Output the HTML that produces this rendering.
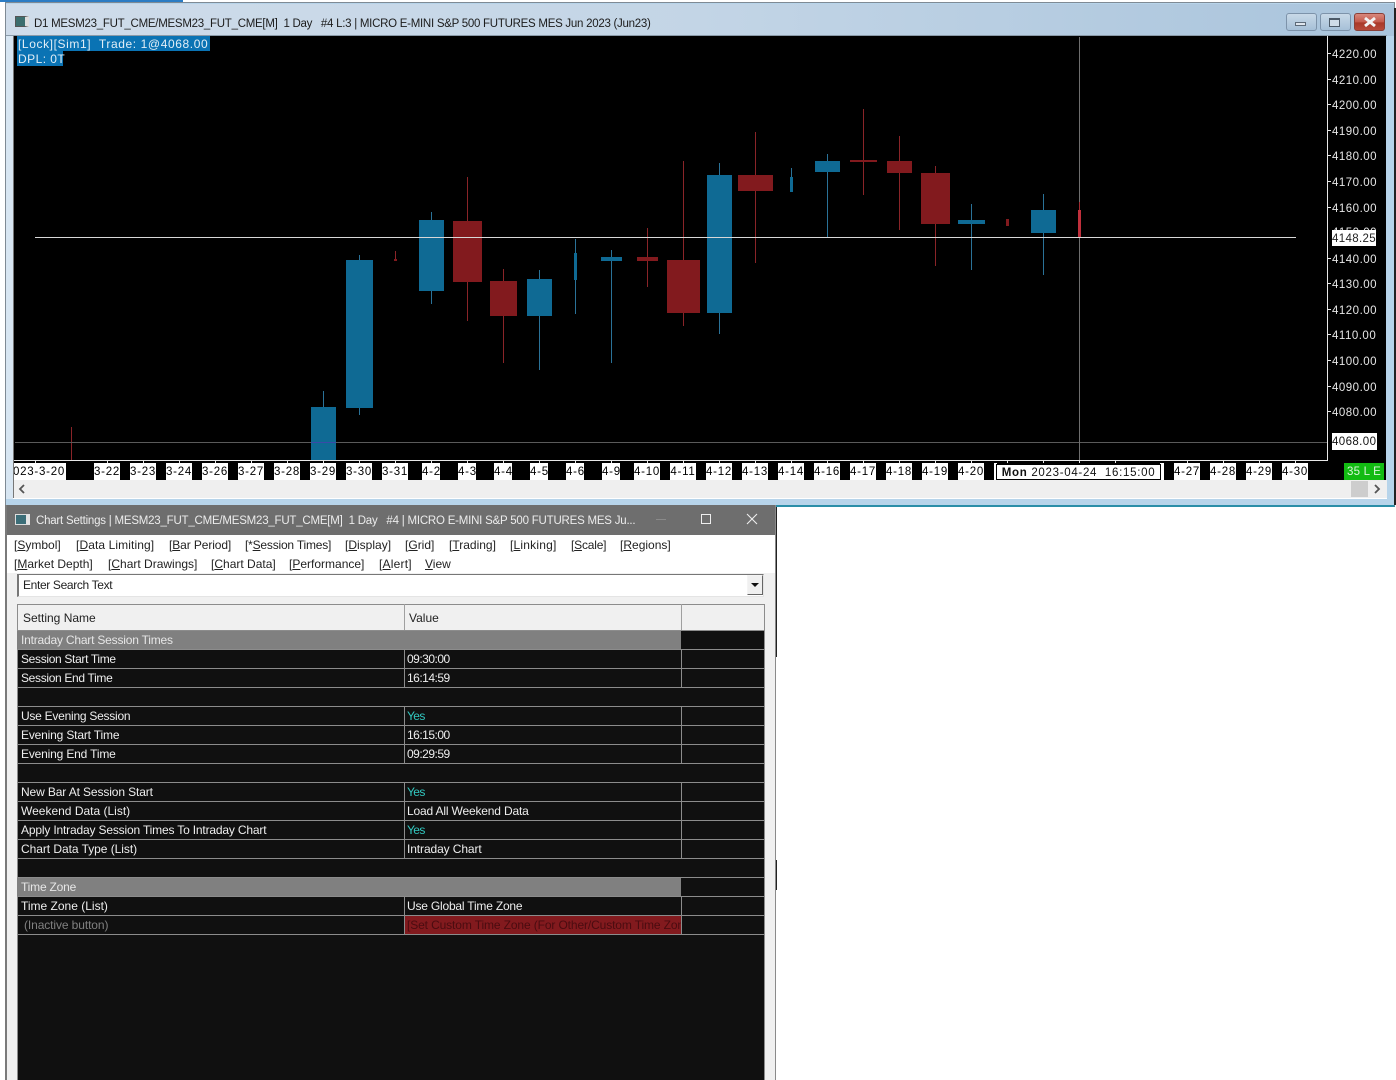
<!DOCTYPE html>
<html><head><meta charset="utf-8"><style>
html,body{margin:0;padding:0;background:#fff;width:1396px;height:1080px;overflow:hidden}
body{position:relative;font-family:"Liberation Sans",sans-serif}
div{position:absolute;box-sizing:border-box;white-space:nowrap}
.p{left:1332px;width:50px;height:16px;line-height:18px;font-size:11.5px;letter-spacing:.5px;color:#e6e6e6}
.d{top:463px;height:17px;line-height:19px;background:#fff;color:#000;font-size:11.5px;letter-spacing:.75px;text-align:center;overflow:hidden}
.m{font-size:12px;line-height:16px;height:16px;color:#222}
.t{font-size:12px;line-height:18px;height:18px;color:#eee;letter-spacing:-.17px}
.n{letter-spacing:-.5px}
.c{color:#32c8c0;letter-spacing:-.6px}
.g{left:17px;width:664px;height:18px;background:#808080;color:#e6e6e6;font-size:12px;line-height:18px;padding-left:4px;letter-spacing:-.2px}
.l{left:17px;width:748px;height:1px;background:#8c8c8c}
u{text-decoration-thickness:1px;text-underline-offset:1px}
</style></head><body>

<div style="left:0;top:0;width:183px;height:2px;background:#2b7cc4"></div>

<!-- chart window -->
<div style="left:5px;top:2px;width:1390px;height:505px;background:#b7d4ea;border:1px solid #7f8a94;border-bottom:2px solid #2a8ea8"></div>
<div style="left:6px;top:4px;width:1388px;height:32px;background:linear-gradient(90deg,#cfdcea 0%,#c3d5e6 50%,#a9c4dc 100%)"></div>
<div style="left:6px;top:35px;width:1381px;height:1px;background:#8a9aa8"></div>
<div style="left:1394px;top:8px;width:2px;height:497px;background:#222"></div>
<div style="left:6px;top:36px;width:7px;height:463px;background:#d8e6f2"></div>
<div style="left:15px;top:16px;width:14px;height:11px;background:#3c6e6e;border:1px solid #555;border-right:4px solid #ddd"></div>
<div style="left:34px;top:15px;font-size:11.5px;line-height:18px;height:18px;color:#1c1c1c;letter-spacing:-.27px">D1 MESM23_FUT_CME/MESM23_FUT_CME[M]&nbsp; 1 Day &nbsp; #4 L:3 | MICRO E-MINI S&amp;P 500 FUTURES MES Jun 2023 (Jun23)</div>

<!-- window buttons -->
<div style="left:1286px;top:13px;width:31px;height:18px;border:1px solid #7d93aa;border-radius:3px;background:linear-gradient(#c8d9e8,#a6c0d8)"></div>
<div style="left:1295px;top:22px;width:11px;height:4px;background:#dfe6ee;border:1px solid #5c6a78"></div>
<div style="left:1320px;top:13px;width:31px;height:18px;border:1px solid #7d93aa;border-radius:3px;background:linear-gradient(#c8d9e8,#a6c0d8)"></div>
<div style="left:1329px;top:18px;width:11px;height:9px;background:#cfdce8;border:1px solid #4c5a68;border-top-width:2px"></div>
<div style="left:1354px;top:13px;width:31px;height:18px;border:1px solid #8a4038;border-radius:3px;background:linear-gradient(#d8887c 0,#c45a4c 50%,#a83828 55%,#b84a3a 100%)"></div>
<svg style="position:absolute;left:1363px;top:16px" width="14" height="12"><path d="M2 2 L12 10 M12 2 L2 10" stroke="#f2f2f2" stroke-width="3"/></svg>

<!-- chart -->
<div style="left:14px;top:36px;width:1372px;height:445px;background:#000"></div>
<svg style="position:absolute;left:0;top:0" width="1396" height="510">
<g fill="#2a7298">
<rect x="323" y="391" width="1" height="16"/>
<rect x="359" y="255" width="1" height="160"/>
<rect x="431" y="212" width="1" height="92"/>
<rect x="539" y="270" width="1" height="100"/>
<rect x="575" y="239" width="1" height="75"/>
<rect x="611" y="250" width="1" height="113"/>
<rect x="719" y="163" width="1" height="171"/>
<rect x="791" y="168" width="1" height="24"/>
<rect x="827" y="154" width="1" height="83"/>
<rect x="971" y="204" width="1" height="66"/>
<rect x="1043" y="194" width="1" height="81"/>
</g>
<g fill="#0f6a94">
<rect x="311" y="407" width="25" height="54"/>
<rect x="346" y="260" width="27" height="148"/>
<rect x="419" y="220" width="25" height="71"/>
<rect x="527" y="279" width="25" height="37"/>
<rect x="574" y="253" width="3" height="27"/>
<rect x="601" y="257" width="21" height="4"/>
<rect x="707" y="175" width="25" height="138"/>
<rect x="790" y="177" width="3" height="15"/>
<rect x="815" y="161" width="25" height="11"/>
<rect x="958" y="220" width="27" height="4"/>
<rect x="1031" y="210" width="25" height="23"/>
</g>
<g fill="#8a2428">
<rect x="71" y="427" width="1" height="34"/>
<rect x="395" y="251" width="1" height="10"/>
<rect x="467" y="177" width="1" height="144"/>
<rect x="503" y="269" width="1" height="94"/>
<rect x="647" y="228" width="1" height="59"/>
<rect x="683" y="161" width="1" height="165"/>
<rect x="755" y="132" width="1" height="131"/>
<rect x="863" y="109" width="1" height="86"/>
<rect x="899" y="136" width="1" height="94"/>
<rect x="935" y="166" width="1" height="100"/>
</g>
<g fill="#821a1e">
<rect x="394" y="259" width="3" height="2"/>
<rect x="453" y="221" width="29" height="61"/>
<rect x="490" y="281" width="27" height="35"/>
<rect x="637" y="257" width="21" height="4"/>
<rect x="667" y="260" width="33" height="53"/>
<rect x="738" y="175" width="35" height="16"/>
<rect x="850" y="160" width="27" height="2"/>
<rect x="887" y="161" width="25" height="12"/>
<rect x="921" y="173" width="29" height="51"/>
<rect x="1006" y="219" width="3" height="7"/>
</g>
<rect x="15" y="442" width="1312" height="1" fill="#5a5a5a"/>
<rect x="1079" y="37" width="1" height="424" fill="#6e6e6e"/>
<rect x="1078" y="210" width="3" height="27" fill="#c0303c"/><rect x="1079" y="202" width="1" height="8" fill="#a02a30"/>
<rect x="35" y="237" width="1261" height="1" fill="#d8d8d8"/>
<rect x="311" y="442" width="25" height="1" fill="#3a4aa8"/>
<rect x="1327" y="36" width="1" height="425" fill="#e8e8e8"/>
<rect x="14" y="460" width="1314" height="1" fill="#e8e8e8"/>
<g fill="#e8e8e8">
<rect x="1328" y="53" width="3" height="1"/><rect x="1328" y="79" width="3" height="1"/><rect x="1328" y="104" width="3" height="1"/><rect x="1328" y="130" width="3" height="1"/><rect x="1328" y="155" width="3" height="1"/><rect x="1328" y="181" width="3" height="1"/><rect x="1328" y="207" width="3" height="1"/><rect x="1328" y="258" width="3" height="1"/><rect x="1328" y="283" width="3" height="1"/><rect x="1328" y="309" width="3" height="1"/><rect x="1328" y="334" width="3" height="1"/><rect x="1328" y="360" width="3" height="1"/><rect x="1328" y="386" width="3" height="1"/><rect x="1328" y="411" width="3" height="1"/>
<rect x="35" y="461" width="1" height="2"/><rect x="107" y="461" width="1" height="2"/><rect x="143" y="461" width="1" height="2"/><rect x="179" y="461" width="1" height="2"/><rect x="215" y="461" width="1" height="2"/><rect x="251" y="461" width="1" height="2"/><rect x="287" y="461" width="1" height="2"/><rect x="323" y="461" width="1" height="2"/><rect x="359" y="461" width="1" height="2"/><rect x="395" y="461" width="1" height="2"/><rect x="431" y="461" width="1" height="2"/><rect x="467" y="461" width="1" height="2"/><rect x="503" y="461" width="1" height="2"/><rect x="539" y="461" width="1" height="2"/><rect x="575" y="461" width="1" height="2"/><rect x="611" y="461" width="1" height="2"/><rect x="647" y="461" width="1" height="2"/><rect x="683" y="461" width="1" height="2"/><rect x="719" y="461" width="1" height="2"/><rect x="755" y="461" width="1" height="2"/><rect x="791" y="461" width="1" height="2"/><rect x="827" y="461" width="1" height="2"/><rect x="863" y="461" width="1" height="2"/><rect x="899" y="461" width="1" height="2"/><rect x="935" y="461" width="1" height="2"/><rect x="971" y="461" width="1" height="2"/><rect x="1007" y="461" width="1" height="2"/><rect x="1043" y="461" width="1" height="2"/><rect x="1079" y="461" width="1" height="2"/><rect x="1115" y="461" width="1" height="2"/><rect x="1187" y="461" width="1" height="2"/><rect x="1223" y="461" width="1" height="2"/><rect x="1259" y="461" width="1" height="2"/><rect x="1295" y="461" width="1" height="2"/>
</g>
</svg>

<div style="left:17px;top:36px;width:193px;height:15px;background:#0a73b4"></div>
<div style="left:17px;top:51px;width:46px;height:15px;background:#0a73b4"></div>
<div style="left:18px;top:37px;height:15px;line-height:15px;font-size:12px;letter-spacing:.6px;color:#e2eef6">[Lock][Sim1]&nbsp; Trade: 1@4068.00</div>
<div style="left:18px;top:52px;height:15px;line-height:15px;font-size:12px;letter-spacing:.45px;color:#e2eef6">DPL: 0T</div>

<!-- price labels -->
<div class="p" style="top:46px">4220.00</div><div class="p" style="top:72px">4210.00</div><div class="p" style="top:97px">4200.00</div><div class="p" style="top:123px">4190.00</div><div class="p" style="top:148px">4180.00</div><div class="p" style="top:174px">4170.00</div><div class="p" style="top:200px">4160.00</div>
<div class="p" style="top:224px">4150.00</div>
<div class="p" style="top:251px">4140.00</div><div class="p" style="top:276px">4130.00</div><div class="p" style="top:302px">4120.00</div><div class="p" style="top:327px">4110.00</div><div class="p" style="top:353px">4100.00</div><div class="p" style="top:379px">4090.00</div><div class="p" style="top:404px">4080.00</div>
<div class="p" style="left:1332px;top:230px;width:44px;height:16px;line-height:19px;background:#fff;color:#222;letter-spacing:.35px">4148.25</div>
<div class="p" style="left:1332px;top:433px;width:45px;height:17px;line-height:19px;background:#fff;color:#111;letter-spacing:.4px">4068.00</div>

<!-- date labels -->
<div class="d" style="left:14px;width:52px;text-align:left"><span style="margin-left:-1px">023-3-20</span></div>
<div class="d" style="left:94px;width:26px">3-22</div><div class="d" style="left:130px;width:26px">3-23</div><div class="d" style="left:166px;width:26px">3-24</div><div class="d" style="left:202px;width:26px">3-26</div><div class="d" style="left:238px;width:26px">3-27</div><div class="d" style="left:274px;width:26px">3-28</div><div class="d" style="left:310px;width:26px">3-29</div><div class="d" style="left:346px;width:26px">3-30</div><div class="d" style="left:382px;width:26px">3-31</div>
<div class="d" style="left:422px;width:18px">4-2</div><div class="d" style="left:458px;width:18px">4-3</div><div class="d" style="left:494px;width:18px">4-4</div><div class="d" style="left:530px;width:18px">4-5</div><div class="d" style="left:566px;width:18px">4-6</div><div class="d" style="left:602px;width:18px">4-9</div>
<div class="d" style="left:634px;width:26px">4-10</div><div class="d" style="left:670px;width:26px">4-11</div><div class="d" style="left:706px;width:26px">4-12</div><div class="d" style="left:742px;width:26px">4-13</div><div class="d" style="left:778px;width:26px">4-14</div><div class="d" style="left:814px;width:26px">4-16</div><div class="d" style="left:850px;width:26px">4-17</div><div class="d" style="left:886px;width:26px">4-18</div><div class="d" style="left:922px;width:26px">4-19</div><div class="d" style="left:958px;width:26px">4-20</div>
<div class="d" style="left:994px;width:3px;background:#fff"></div>
<div class="d" style="left:1160px;width:4px;background:#fff"></div>
<div class="d" style="left:1174px;width:26px">4-27</div><div class="d" style="left:1210px;width:26px">4-28</div><div class="d" style="left:1246px;width:26px">4-29</div><div class="d" style="left:1282px;width:26px">4-30</div>
<div style="left:996px;top:464px;width:165px;height:16px;line-height:16px;background:#fff;border:1px solid #000;color:#111;font-size:11.5px;letter-spacing:.7px;text-align:center"><b>Mon</b> 2023-04-24&nbsp; 16:15:00</div>
<div style="left:1344px;top:463px;width:40px;height:17px;line-height:19px;background:#12bb12;color:#d8f4d8;font-size:11.5px;letter-spacing:.2px;text-align:center">35 L E</div>

<!-- scrollbar -->
<div style="left:13px;top:480px;width:1374px;height:18px;background:#efefef"></div>
<div style="left:13px;top:498px;width:1374px;height:1px;background:#fff"></div>
<div style="left:13px;top:36px;width:1px;height:462px;background:#777"></div>
<div style="left:1351px;top:481px;width:17px;height:16px;background:#cdcdcd"></div>
<svg style="position:absolute;left:18px;top:484px" width="8" height="10"><path d="M6 1 L2 5 L6 9" fill="none" stroke="#555" stroke-width="1.8"/></svg>
<svg style="position:absolute;left:1373px;top:484px" width="8" height="10"><path d="M2 1 L6 5 L2 9" fill="none" stroke="#555" stroke-width="1.8"/></svg>

<!-- settings window -->
<div style="left:776px;top:507px;width:1px;height:150px;background:#222"></div>
<div style="left:776px;top:860px;width:1px;height:30px;background:#222"></div>
<div style="left:5px;top:505px;width:771px;height:575px;background:#f0f0f0;border-left:2px solid #7a7a7a;border-right:1px solid #8a8a8a"></div>
<div style="left:7px;top:505px;width:768px;height:30px;background:#6e6e6e"></div>
<div style="left:7px;top:535px;width:768px;height:38px;background:#fff"></div>
<div style="left:15px;top:514px;width:15px;height:11px;background:#3c6e78;border:1px solid #ddd;border-right:4px solid #e4e4e4"></div>
<div style="left:36px;top:512px;font-size:11.5px;line-height:18px;height:18px;color:#ececec;letter-spacing:-.22px">Chart Settings | MESM23_FUT_CME/MESM23_FUT_CME[M]&nbsp; 1 Day &nbsp; #4 | MICRO E-MINI S&amp;P 500 FUTURES MES Ju...</div>
<div style="left:656px;top:519px;width:10px;height:1px;background:#8a8a8a"></div>
<div style="left:701px;top:514px;width:10px;height:10px;border:1px solid #eee"></div>
<svg style="position:absolute;left:746px;top:513px" width="12" height="12"><path d="M1 1 L11 11 M11 1 L1 11" stroke="#eee" stroke-width="1.1"/></svg>

<div class="m" style="left:14px;top:537px">[<u>S</u>ymbol]</div><div class="m" style="left:76px;top:537px;letter-spacing:.1px">[<u>D</u>ata Limiting]</div><div class="m" style="left:169px;top:537px;letter-spacing:-.1px">[<u>B</u>ar Period]</div><div class="m" style="left:245px;top:537px;letter-spacing:-.2px">[*<u>S</u>ession Times]</div><div class="m" style="left:345px;top:537px">[<u>D</u>isplay]</div><div class="m" style="left:405px;top:537px">[<u>G</u>rid]</div><div class="m" style="left:449px;top:537px">[<u>T</u>rading]</div><div class="m" style="left:510px;top:537px;letter-spacing:.2px">[<u>L</u>inking]</div><div class="m" style="left:571px;top:537px;letter-spacing:-.2px">[<u>S</u>cale]</div><div class="m" style="left:620px;top:537px">[<u>R</u>egions]</div>
<div class="m" style="left:14px;top:556px">[<u>M</u>arket Depth]</div><div class="m" style="left:108px;top:556px">[<u>C</u>hart Drawings]</div><div class="m" style="left:211px;top:556px">[<u>C</u>hart Data]</div><div class="m" style="left:289px;top:556px">[<u>P</u>erformance]</div><div class="m" style="left:379px;top:556px;letter-spacing:.2px">[<u>A</u>lert]</div><div class="m" style="left:425px;top:556px"><u>V</u>iew</div>

<div style="left:17px;top:574px;width:747px;height:23px;background:#fff;border:1px solid #e4e4e4;border-top:1px solid #777;border-left:2px solid #777"></div>
<div class="m" style="left:23px;top:577px;letter-spacing:-.35px">Enter Search Text</div>
<div style="left:747px;top:575px;width:16px;height:20px;background:#f0f0f0;border:1px solid #f4f4f4;border-right-color:#666;border-bottom-color:#666"></div>
<svg style="position:absolute;left:751px;top:583px" width="9" height="5"><path d="M0 0 H8 L4 4 Z" fill="#111"/></svg>

<!-- table -->
<div style="left:17px;top:604px;width:748px;height:26px;background:#f0f0f0;border:1px solid #8c8c8c;border-bottom:0"></div>
<div class="m" style="left:23px;top:610px">Setting Name</div>
<div class="m" style="left:409px;top:610px">Value</div>
<div style="left:17px;top:630px;width:748px;height:450px;background:#101010"></div>
<div style="left:17px;top:604px;width:1px;height:476px;background:#8c8c8c"></div>
<div style="left:764px;top:604px;width:1px;height:476px;background:#8c8c8c"></div>
<div style="left:404px;top:604px;width:1px;height:26px;background:#a0a0a0"></div>
<div style="left:681px;top:604px;width:1px;height:26px;background:#a0a0a0"></div>
<div class="g" style="top:631px">Intraday Chart Session Times</div>
<div class="g" style="top:878px">Time Zone</div>
<div style="left:404px;top:650px;width:1px;height:38px;background:#8c8c8c"></div><div style="left:681px;top:650px;width:1px;height:38px;background:#8c8c8c"></div>
<div style="left:404px;top:707px;width:1px;height:57px;background:#8c8c8c"></div><div style="left:681px;top:707px;width:1px;height:57px;background:#8c8c8c"></div>
<div style="left:404px;top:783px;width:1px;height:76px;background:#8c8c8c"></div><div style="left:681px;top:783px;width:1px;height:76px;background:#8c8c8c"></div>
<div style="left:404px;top:897px;width:1px;height:38px;background:#8c8c8c"></div><div style="left:681px;top:897px;width:1px;height:38px;background:#8c8c8c"></div>
<div class="l" style="top:630px"></div><div class="l" style="top:649px"></div><div class="l" style="top:668px"></div><div class="l" style="top:687px"></div><div class="l" style="top:706px"></div><div class="l" style="top:725px"></div><div class="l" style="top:744px"></div><div class="l" style="top:763px"></div><div class="l" style="top:782px"></div><div class="l" style="top:801px"></div><div class="l" style="top:820px"></div><div class="l" style="top:839px"></div><div class="l" style="top:858px"></div><div class="l" style="top:877px"></div><div class="l" style="top:896px"></div><div class="l" style="top:915px"></div><div class="l" style="top:934px"></div>

<div class="t" style="left:21px;top:650px;letter-spacing:-.33px">Session Start Time</div><div class="t n" style="left:407px;top:650px">09:30:00</div>
<div class="t" style="left:21px;top:669px;letter-spacing:-.33px">Session End Time</div><div class="t n" style="left:407px;top:669px">16:14:59</div>
<div class="t" style="left:21px;top:707px;letter-spacing:-.25px">Use Evening Session</div><div class="t c" style="left:407px;top:707px">Yes</div>
<div class="t" style="left:21px;top:726px">Evening Start Time</div><div class="t n" style="left:407px;top:726px">16:15:00</div>
<div class="t" style="left:21px;top:745px">Evening End Time</div><div class="t n" style="left:407px;top:745px">09:29:59</div>
<div class="t" style="left:21px;top:783px;letter-spacing:-.12px">New Bar At Session Start</div><div class="t c" style="left:407px;top:783px">Yes</div>
<div class="t" style="left:21px;top:802px;letter-spacing:0">Weekend Data (List)</div><div class="t" style="left:407px;top:802px">Load All Weekend Data</div>
<div class="t" style="left:21px;top:821px">Apply Intraday Session Times To Intraday Chart</div><div class="t c" style="left:407px;top:821px">Yes</div>
<div class="t" style="left:21px;top:840px;letter-spacing:-.05px">Chart Data Type (List)</div><div class="t" style="left:407px;top:840px;letter-spacing:-.1px">Intraday Chart</div>
<div class="t" style="left:21px;top:897px;letter-spacing:0">Time Zone (List)</div><div class="t" style="left:407px;top:897px;letter-spacing:-.2px">Use Global Time Zone</div>
<div class="t" style="left:24px;top:916px;color:#808080;letter-spacing:-.1px">(Inactive button)</div>
<div class="t" style="left:405px;top:916px;width:276px;background:#821a1e;color:#4a0c10;padding-left:2px;overflow:hidden;letter-spacing:-.12px">[Set Custom Time Zone (For Other/Custom Time Zone)]</div>
</body></html>
